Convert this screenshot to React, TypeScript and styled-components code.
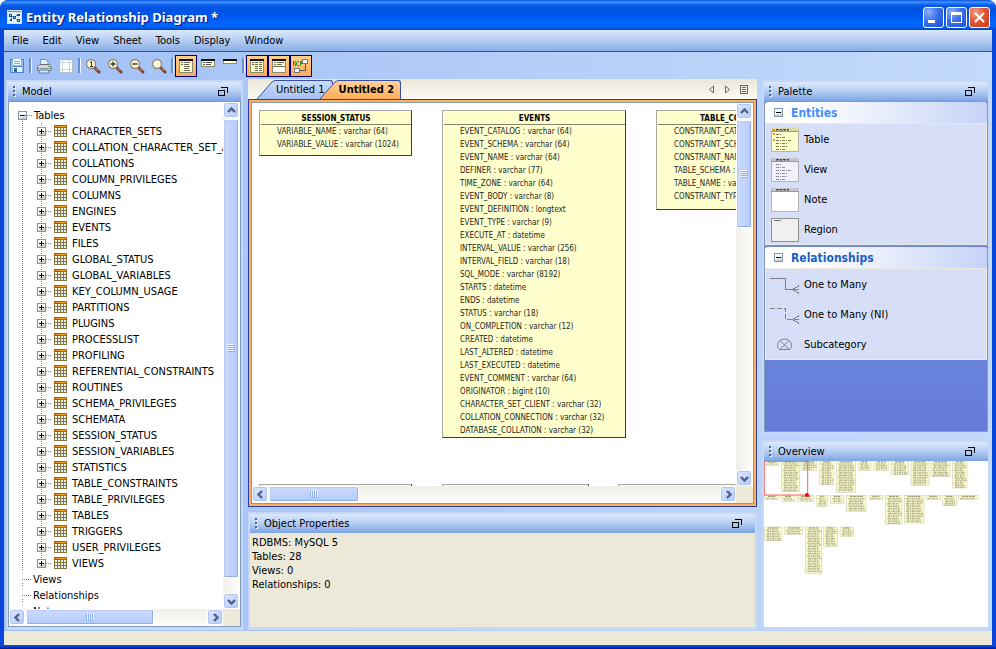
import React from "react";
import styled, { createGlobalStyle, css } from "styled-components";

const Global = createGlobalStyle`
  * { box-sizing: border-box; }
  html, body { margin: 0; padding: 0; background: #fff; }
  body, button { font-family: "DejaVu Sans Condensed", "DejaVu Sans", "Noto Sans", sans-serif; font-size: 11px; line-height: 16px; color: #000; }
  body { font-stretch: condensed; }
  button { padding: 0; border: 0; background: none; font-stretch: inherit; }
  ul { list-style: none; margin: 0; padding: 0; }
  svg { display: block; flex: none; }
`;

/* ---------- window chrome ---------- */

const Window = styled.div`
  height: 100vh;
  display: flex;
  flex-direction: column;
  overflow: hidden;
  border-radius: 8px 8px 0 0;
  background: #0b46dc;
`;

const TitleBar = styled.header`
  flex: none;
  height: 30px;
  display: flex;
  align-items: center;
  gap: 4px;
  padding: 4px 6px 0 7px;
  border-radius: 8px 8px 0 0;
  background: linear-gradient(#0a4fe0 0, #3d95ff 2px, #0a5ce8 5px, #0052e3 10px, #0058ee 16px, #0066fd 24px, #0060f8 27px, #0040c4 30px);
`;

const Title = styled.h1`
  flex: 1;
  margin: 0;
  font: bold 13px/18px "Noto Sans", "Open Sans", sans-serif;
  font-stretch: condensed;
  color: #fff;
  text-shadow: 1px 1px 1px #0a1883;
`;

const WindowButtons = styled.div`
  display: flex;
  gap: 2px;
`;

const WindowButton = styled.button<{ $close?: boolean }>`
  width: 21px;
  height: 21px;
  display: grid;
  place-items: center;
  border: 1px solid #fff;
  border-radius: 3px;
  background: ${(p) =>
    p.$close
      ? "radial-gradient(circle at 30% 25%, #f0a088 0, #e0573a 45%, #c93a12 100%)"
      : "radial-gradient(circle at 25% 20%, #8eaefa 0, #3c71ea 45%, #1c4fd8 100%)"};
`;

const Frame = styled.div`
  flex: 1;
  min-height: 0;
  display: flex;
  flex-direction: column;
  margin: 0 4px;
  background: linear-gradient(90deg, #a2c0f6, #c3dafa);
`;

const BottomEdge = styled.div`
  flex: none;
  height: 4px;
  background: linear-gradient(#0a50ee, #0838c8 50%, #001590);
`;

const MenuBar = styled.nav`
  flex: none;
  height: 22px;
  display: flex;
  align-items: center;
  padding: 1px 1px 0;
  border-bottom: 1px solid #3a4ea6;
  background: linear-gradient(#dbe9fb, #b5cdf2 50%, #8aaee5);
`;

const MenuItem = styled.button`
  padding: 0 7px;
`;

const ToolBar = styled.div`
  flex: none;
  height: 27px;
  display: flex;
  align-items: center;
  padding: 0 2px;
`;

const ToolButton = styled.button<{ $on?: boolean }>`
  width: 22px;
  height: 22px;
  display: grid;
  place-items: center;
  ${(p) =>
    p.$on &&
    css`
      border: 1px solid #000080;
      background: linear-gradient(#ffd08a, #ffab57);
    `}
`;

const ToolSeparator = styled.i`
  width: 5px;
  height: 15px;
  display: flex;
  justify-content: center;
  &::before {
    content: "";
    width: 2px;
    background: #6a8ccb;
    border-right: 1px solid #f1f6ff;
  }
`;

const Workspace = styled.main`
  flex: 1;
  min-height: 0;
  display: grid;
  grid-template-columns: 237px minmax(0, 1fr) 228px;
  column-gap: 5px;
  padding: 0 2px 1px;
`;

const Column = styled.div<{ $gap?: number; $top?: number }>`
  min-width: 0;
  min-height: 0;
  display: flex;
  flex-direction: column;
  gap: ${(p) => p.$gap ?? 0}px;
  padding-top: ${(p) => p.$top ?? 0}px;
`;

const StatusBar = styled.footer`
  flex: none;
  height: 14px;
  background: #ece9d8;
`;

/* ---------- docked panel ---------- */

const PanelBox = styled.section<{ $height?: number }>`
  ${(p) => (p.$height ? `flex: none; height: ${p.$height}px;` : "flex: 1; min-height: 0;")}
  display: flex;
  flex-direction: column;
  padding: 2px 2px 3px;
  background: #c5d8fb;
`;

const PanelHeader = styled.header`
  flex: none;
  height: 19px;
  display: flex;
  align-items: center;
  gap: 6px;
  padding: 0 13px 0 5px;
  background: linear-gradient(#dce9fc, #b4cdf3 50%, #7da4e4);
`;

const PanelTitle = styled.h2`
  flex: 1;
  margin: 0;
  font: inherit;
`;

const PanelBody = styled.div<{ $tone?: string; $framed?: boolean }>`
  flex: 1;
  min-height: 0;
  display: flex;
  flex-direction: column;
  background: ${(p) => p.$tone ?? "#fff"};
  border: ${(p) => (p.$framed ? "1px solid #7f9db9" : "0")};
`;

const Grip = () => (
  <svg width="3" height="12" viewBox="0 0 3 12" shapeRendering="crispEdges" aria-hidden>
    {[0, 4, 8].map((y) => (
      <g key={y}>
        <rect x="1" y={y + 1} width="2" height="2" fill="#eef4ff" />
        <rect x="0" y={y} width="2" height="2" fill="#4a66a8" />
      </g>
    ))}
  </svg>
);

const FloatGlyph = () => (
  <svg width="10" height="9" viewBox="0 0 10 9" shapeRendering="crispEdges" aria-hidden>
    <path d="M0 3h7v6H0zM1 4v4h5V4z" fill="#000" fillRule="evenodd" />
    <path d="M3 0h7v6H9V1H3z" fill="#000" />
  </svg>
);

function Panel(props: {
  title: string;
  height?: number;
  tone?: string;
  framed?: boolean;
  children: React.ReactNode;
}) {
  return (
    <PanelBox $height={props.height} aria-label={props.title}>
      <PanelHeader>
        <Grip />
        <PanelTitle>{props.title}</PanelTitle>
        <button aria-label={`Float ${props.title}`}>
          <FloatGlyph />
        </button>
      </PanelHeader>
      <PanelBody $tone={props.tone} $framed={props.framed}>
        {props.children}
      </PanelBody>
    </PanelBox>
  );
}

/* ---------- scrolling ---------- */

const ScrollGrid = styled.div`
  flex: 1;
  min-height: 0;
  display: grid;
  grid-template: minmax(0, 1fr) 17px / minmax(0, 1fr) 17px;
  background: #ece9d8;
`;

const Viewport = styled.div`
  position: relative;
  overflow: hidden;
  background: #fff;
`;

const Bar = styled.div<{ $vertical?: boolean }>`
  display: flex;
  flex-direction: ${(p) => (p.$vertical ? "column" : "row")};
  min-width: 0;
  min-height: 0;
  padding: ${(p) => (p.$vertical ? "0 1px 0 0" : "0 0 1px")};
  background: linear-gradient(${(p) => (p.$vertical ? "90deg" : "180deg")}, #f0efe9, #fefefb);
`;

const Track = styled.div<{ $vertical?: boolean }>`
  flex: 1;
  min-width: 0;
  min-height: 0;
  display: flex;
  flex-direction: ${(p) => (p.$vertical ? "column" : "row")};
  padding: ${(p) => (p.$vertical ? "1px 0" : "0 1px")};
`;

const Arrow = styled.button`
  flex: none;
  width: 16px;
  height: 16px;
  display: grid;
  place-items: center;
  border: 1px solid #fff;
  border-radius: 3px;
  background: linear-gradient(135deg, #dce7fe, #b4cafa);
  box-shadow: inset 0 0 0 1px #b0c6f2;
`;

const Thumb = styled.div<{ $vertical?: boolean; $share: number }>`
  flex: none;
  ${(p) => (p.$vertical ? "height" : "width")}: ${(p) => p.$share}%;
  display: grid;
  place-items: center;
  border: 1px solid #fff;
  border-radius: 2px;
  background: linear-gradient(${(p) => (p.$vertical ? "90deg" : "180deg")}, #cbdafd, #bacffc 80%, #b0c6f6);
  box-shadow: inset -1px -1px 0 #93aee6, inset 1px 1px 0 #b7cbf6;
`;

const arrows = {
  up: "M1 6 4.500 2.500 8 6",
  down: "M1 3 4.500 6.500 8 3",
  left: "M6 1 2.500 4.500 6 8",
  right: "M3 1 6.500 4.500 3 8",
};

function ScrollBar({ vertical, share, label }: { vertical?: boolean; share: number; label: string }) {
  const [a, b] = vertical ? (["up", "down"] as const) : (["left", "right"] as const);
  const arrow = (dir: keyof typeof arrows) => (
    <Arrow aria-label={`${label} ${dir}`}>
      <svg width="9" height="9" viewBox="0 0 9 9" aria-hidden>
        <path d={arrows[dir]} fill="none" stroke="#4d6185" strokeWidth="2.400" />
      </svg>
    </Arrow>
  );
  return (
    <Bar $vertical={vertical}>
      {arrow(a)}
      <Track $vertical={vertical}>
        <Thumb $vertical={vertical} $share={share}>
          <svg width="8" height="8" viewBox="0 0 8 8" shapeRendering="crispEdges" aria-hidden>
            <g transform={vertical ? undefined : "rotate(90 4 4)"}>
              {[0, 2, 4, 6].map((y) => (
                <g key={y}>
                  <rect y={y} width="7" height="1" fill="#eef4fe" />
                  <rect x="1" y={y + 1} width="7" height="1" fill="#8cb0f8" />
                </g>
              ))}
            </g>
          </svg>
        </Thumb>
      </Track>
      {arrow(b)}
    </Bar>
  );
}

/* ---------- model tree ---------- */

const tableNames = [
  "CHARACTER_SETS",
  "COLLATION_CHARACTER_SET_APPLICABILITY",
  "COLLATIONS",
  "COLUMN_PRIVILEGES",
  "COLUMNS",
  "ENGINES",
  "EVENTS",
  "FILES",
  "GLOBAL_STATUS",
  "GLOBAL_VARIABLES",
  "KEY_COLUMN_USAGE",
  "PARTITIONS",
  "PLUGINS",
  "PROCESSLIST",
  "PROFILING",
  "REFERENTIAL_CONSTRAINTS",
  "ROUTINES",
  "SCHEMA_PRIVILEGES",
  "SCHEMATA",
  "SESSION_STATUS",
  "SESSION_VARIABLES",
  "STATISTICS",
  "TABLE_CONSTRAINTS",
  "TABLE_PRIVILEGES",
  "TABLES",
  "TRIGGERS",
  "USER_PRIVILEGES",
  "VIEWS",
];

const dotsDown = "repeating-linear-gradient(#808080 0 1px, transparent 1px 2px)";
const dotsAcross = "repeating-linear-gradient(90deg, #808080 0 1px, transparent 1px 2px)";

const Tree = styled.ul`
  padding: 5px 0 0 9px;
  white-space: nowrap;
`;

const Branch = styled.li`
  background: ${dotsDown} 4px 12px / 1px 100% no-repeat;
`;

const Leaves = styled.ul`
  margin-left: 19px;
  background: ${dotsDown} 4px 0 / 1px calc(100% - 8px) no-repeat;
`;

const Node = styled.div<{ $leaf?: boolean }>`
  height: 16px;
  display: flex;
  align-items: center;
  padding-left: ${(p) => (p.$leaf ? 4 : 0)}px;
`;

const Stub = styled.i<{ $width: number }>`
  flex: none;
  width: ${(p) => p.$width}px;
  height: 1px;
  margin-right: 2px;
  background: ${dotsAcross};
`;

const Label = styled.span`
  padding-top: 2px;
  ${Leaves} & { margin-left: 5px; }
`;

const BoxGlyph = ({ plus }: { plus?: boolean }) => (
  <svg width="9" height="9" viewBox="0 0 9 9" shapeRendering="crispEdges" aria-hidden>
    <rect x="0" y="0" width="9" height="9" fill="#7898b5" />
    <rect x="1" y="1" width="7" height="7" fill="#fff" />
    <path d="M3 6h5v2H1V7h2zM7 3h1v3H7z" fill="#d5cfc0" />
    <path d={plus ? "M2 4h5v1H2zM4 2h1v5H4z" : "M2 4h5v1H2z"} fill="#000" />
  </svg>
);

const TableGlyph = () => (
  <svg width="13" height="12" viewBox="0 0 13 12" shapeRendering="crispEdges" aria-hidden>
    <rect width="13" height="12" fill="#857440" />
    <rect width="13" height="3" fill="#b3541e" />
    <rect x="1" y="1" width="11" height="1" fill="#ffb400" />
    <rect x="1" y="1" width="5" height="1" fill="#f08a1c" />
    {[3, 6, 9].map((y) =>
      [1, 4, 7, 10].map((x) => (
        <rect key={`${x}-${y}`} x={x} y={y} width="2" height="2" fill={x < 4 ? "#fff" : "#dff0ee"} />
      )),
    )}
  </svg>
);

function ModelTree() {
  return (
    <Tree aria-label="Model">
      <Branch>
        <Node>
          <button aria-label="Collapse Tables">
            <BoxGlyph />
          </button>
          <Stub $width={5} />
          <Label>Tables</Label>
        </Node>
        <Leaves>
          {tableNames.map((name) => (
            <li key={name}>
              <Node>
                <button aria-label={`Expand ${name}`}>
                  <BoxGlyph plus />
                </button>
                <Stub $width={6} />
                <TableGlyph />
                <Label>{name}</Label>
              </Node>
            </li>
          ))}
        </Leaves>
      </Branch>
      {["Views", "Relationships", "Notes"].map((name) => (
        <Branch key={name}>
          <Node $leaf>
            <Stub $width={9} />
            <Label>{name}</Label>
          </Node>
        </Branch>
      ))}
    </Tree>
  );
}

/* ---------- document tabs ---------- */

const TabStrip = styled.div`
  flex: none;
  height: 20px;
  display: flex;
  align-items: flex-end;
  padding-left: 8px;
  background: linear-gradient(#eae7d6, #fbfaf5);
`;

const TabButton = styled.button<{ $active?: boolean }>`
  display: flex;
  height: 19px;
  font-weight: ${(p) => (p.$active ? "bold" : "normal")};
  & + & { margin-left: -14px; }
`;

const TabFace = styled.span<{ $active?: boolean }>`
  height: 19px;
  padding: ${(p) => (p.$active ? "0 6px 0 0" : "0 7px 0 0")};
  line-height: 18px;
  border: 1px solid #3a4ea6;
  border-width: 1px 1px 0 0;
  border-radius: 0 3px 0 0;
  background: ${(p) => (p.$active ? "linear-gradient(#ffd09a, #ffad56)" : "linear-gradient(#c9dcfa, #a3c2f5)")};
`;

const TabTools = styled.div`
  flex: 1;
  display: flex;
  justify-content: flex-end;
  align-items: center;
  gap: 9px;
  height: 20px;
  padding-right: 9px;
`;

function Tab({ name, active }: { name: string; active?: boolean }) {
  const id = active ? "slope-on" : "slope-off";
  return (
    <TabButton role="tab" aria-selected={!!active} $active={active}>
      <svg width="20" height="19" viewBox="0 0 20 19" aria-hidden>
        <defs>
          <linearGradient id={id} x1="0" y1="0" x2="0" y2="1">
            <stop offset="0" stopColor={active ? "#ffd09a" : "#c9dcfa"} />
            <stop offset="1" stopColor={active ? "#ffad56" : "#a3c2f5"} />
          </linearGradient>
        </defs>
        <path d="M1 19 16 2Q17.500 .5 20 .5V19Z" fill={`url(#${id})`} />
        <path d="M1 19 16 2Q17.500 .5 20 .5" fill="none" stroke="#3a4ea6" />
      </svg>
      <TabFace $active={active}>{name}</TabFace>
    </TabButton>
  );
}

const DocFrame = styled.div`
  flex: 1;
  min-height: 0;
  display: flex;
  padding: 2px;
  margin-bottom: 5px;
  border: 1px solid #2f3f9f;
  background: #ffad56;
`;

const DocInner = styled.div`
  flex: 1;
  min-width: 0;
  display: flex;
  border: 1px solid #7f9db9;
`;

/* ---------- diagram ---------- */

const Entity = styled.article<{ $x: number; $y: number; $w: number; $h: number }>`
  position: absolute;
  left: ${(p) => p.$x}px;
  top: ${(p) => p.$y}px;
  width: ${(p) => p.$w}px;
  min-height: ${(p) => p.$h}px;
  border: 1px solid #3c3c30;
  border-top-color: #a8a8a0;
  border-left-color: #a8a8a0;
  background: #ffffce;
  font-size: 8px;
  line-height: 13px;
  color: #26261c;
  white-space: nowrap;
`;

const EntityName = styled.h3`
  margin: 0 0 0 1px;
  height: 14px;
  border-bottom: 1px solid #85856c;
  font-size: 8px;
  line-height: 15px;
  text-align: center;
  color: #000;
`;

const Columns = styled.ul`
  padding-left: 17px;
`;

type EntityData = { name: string; x: number; y: number; w: number; h: number; columns: string[] };

const entities: EntityData[] = [
  {
    name: "SESSION_STATUS", x: 7, y: 7, w: 153, h: 46,
    columns: ["VARIABLE_NAME : varchar (64)", "VARIABLE_VALUE : varchar (1024)"],
  },
  {
    name: "EVENTS", x: 190, y: 7, w: 184, h: 328,
    columns: [
      "EVENT_CATALOG : varchar (64)",
      "EVENT_SCHEMA : varchar (64)",
      "EVENT_NAME : varchar (64)",
      "DEFINER : varchar (77)",
      "TIME_ZONE : varchar (64)",
      "EVENT_BODY : varchar (8)",
      "EVENT_DEFINITION : longtext",
      "EVENT_TYPE : varchar (9)",
      "EXECUTE_AT : datetime",
      "INTERVAL_VALUE : varchar (256)",
      "INTERVAL_FIELD : varchar (18)",
      "SQL_MODE : varchar (8192)",
      "STARTS : datetime",
      "ENDS : datetime",
      "STATUS : varchar (18)",
      "ON_COMPLETION : varchar (12)",
      "CREATED : datetime",
      "LAST_ALTERED : datetime",
      "LAST_EXECUTED : datetime",
      "EVENT_COMMENT : varchar (64)",
      "ORIGINATOR : bigint (10)",
      "CHARACTER_SET_CLIENT : varchar (32)",
      "COLLATION_CONNECTION : varchar (32)",
      "DATABASE_COLLATION : varchar (32)",
    ],
  },
  {
    name: "TABLE_CONSTRAINTS", x: 404, y: 7, w: 173, h: 100,
    columns: [
      "CONSTRAINT_CATALOG : varchar (512)",
      "CONSTRAINT_SCHEMA : varchar (64)",
      "CONSTRAINT_NAME : varchar (64)",
      "TABLE_SCHEMA : varchar (64)",
      "TABLE_NAME : varchar (64)",
      "CONSTRAINT_TYPE : varchar (64)",
    ],
  },
  { name: "", x: 7, y: 381, w: 153, h: 40, columns: [] },
  { name: "", x: 190, y: 381, w: 147, h: 40, columns: [] },
  { name: "", x: 366, y: 381, w: 160, h: 40, columns: [] },
];

/* ---------- palette ---------- */

const PaletteBody = styled.div`
  flex: 1;
  display: flex;
  flex-direction: column;
  gap: 2px;
  background: linear-gradient(#7393e2, #6a87dd 70%, #667ad8);
`;

const GroupHead = styled.h3<{ $hot?: boolean }>`
  height: 21px;
  margin: 0;
  display: flex;
  align-items: center;
  gap: 8px;
  padding-left: 9px;
  border-radius: 3px 3px 0 0;
  background: linear-gradient(90deg, #fff 20%, #c6d3f7);
  font-size: 12px;
  color: ${(p) => (p.$hot ? "#428eff" : "#215dc6")};
`;

const GroupItems = styled.ul`
  border: 1px solid #ece9e2;
  background: #d6dff7;
`;

const PaletteButton = styled.button`
  width: 100%;
  height: 30px;
  display: flex;
  align-items: center;
  gap: 4px;
  padding: 2px 0 0 4px;
  text-align: left;
`;

const EntityPreview = ({ kind }: { kind: "table" | "view" | "note" | "region" }) => {
  const fill = { table: "#ffffcc", view: "#f0f0ff", note: "#ffffff", region: "#f0f0f0" }[kind];
  const rows = [6, 10, 15, 12, 11, 9];
  return (
    <svg width="30" height="26" viewBox="0 0 30 26" shapeRendering="crispEdges" aria-hidden>
      <rect x="1" y="1" width="28" height="24" fill={kind === "region" ? "#909090" : "#b4b4b4"} />
      <rect x="2" y="2" width="26" height="22" fill={fill} />
      {kind === "region" ? (
        <rect x="4" y="3" width="7" height="1" fill="#777" />
      ) : (
        <>
          <rect x="1" y="1" width="28" height="4" fill={kind === "table" ? "#dedca8" : "#c4c4cc"} />
          <path d="M6 2.500h13" stroke="#444" strokeDasharray="3 1 2 1" />
          <path d="M6 3.500h13" stroke="#888" strokeDasharray="2 1 4 1" />
          <path d="M1 4.500h28" stroke="#999" />
        </>
      )}
      {(kind === "table" || kind === "view") &&
        rows.map((w, i) => (
          <path
            key={i}
            d={`M6 ${i * 3 + 7}.500h${w}`}
            stroke={kind === "table" ? "#7c7c50" : "#8c8c9c"}
            strokeDasharray="3 1 1 1"
          />
        ))}
      {kind === "table" && <path d="M2 2h3v2H2zM3 6h2v2H3zM3 12h2v2H3z" fill="#e0981c" />}
    </svg>
  );
};

const LinkPreview = ({ dashed }: { dashed?: boolean }) => (
  <svg width="30" height="18" viewBox="0 0 30 18" shapeRendering="crispEdges" aria-hidden>
    <path d="M0 2.500h15.500V13.500H29" fill="none" stroke="#808080" strokeDasharray={dashed ? "5 2" : undefined} />
    <path d="M22 13.500 29.500 9.500M22 13.500 29.500 17.500" fill="none" stroke="#808080" />
  </svg>
);

const SubcategoryPreview = () => (
  <svg width="30" height="18" viewBox="0 0 30 18" aria-hidden>
    <path
      d="M9.500 13.500Q7.500 11.500 7.500 9.500A7 6.500 0 0 1 21.500 9.500Q21.500 11.500 19.500 13.500ZM10 4.500 19 13.500M19 4.500 10 13.500"
      fill="none"
      stroke="#808080"
    />
  </svg>
);

/* ---------- object properties ---------- */

const Facts = styled.ul`
  padding: 3px 2px;
  line-height: 14px;
`;

/* ---------- overview ---------- */

/* x, y, width, height of each entity on the sheet */
const thumbs = [
  [2, 0, 43, 13], [53, 0, 53, 91], [111, 0, 48, 28], [167, 0, 43, 71], [218, 0, 57, 94],
  [282, 0, 39, 28], [330, 0, 45, 28], [383, 0, 50, 40], [441, 0, 54, 73], [501, 0, 57, 46],
  [566, 0, 43, 81],
  [2, 103, 43, 12], [53, 103, 40, 18], [101, 103, 48, 18], [158, 103, 33, 33], [200, 103, 40, 24],
  [248, 103, 58, 48], [315, 103, 42, 12], [365, 103, 49, 86], [421, 103, 59, 83],
  [487, 103, 43, 12], [536, 103, 42, 30], [584, 103, 58, 12],
  [2, 198, 52, 40], [62, 198, 55, 22], [125, 198, 48, 139], [179, 198, 41, 58], [228, 198, 41, 28],
];

function Overview() {
  return (
    <svg width="224" height="166" viewBox="0 0 672 498" role="img" aria-label="Sheet overview">
      {thumbs.map(([x, y, w, h], i) => (
        <g key={i}>
          <rect x={x} y={y} width={w} height={h} fill="#fbfbca" stroke="#d4d4b8" strokeWidth="2" />
          <path d={`M${x + 10} ${y + 3}h${w - 20}`} stroke="#55553c" strokeWidth="3" strokeDasharray="8 2" opacity="0.700" />
          {Array.from({ length: Math.floor((h - 5) / 5) }, (_, r) => (
            <path
              key={r}
              d={`M${x + 5 + ((r * 3) % 4)} ${y + 9 + r * 5}h${w - 9 - ((r * 7 + i) % 8)}`}
              stroke="#85856c"
              strokeWidth="3"
              strokeDasharray={`${6 + ((r + i) % 4)} 2 4 2`}
              opacity="0.700"
            />
          ))}
        </g>
      ))}
      <rect x="1" y="1" width="130" height="101" fill="none" stroke="#ff6060" strokeWidth="3" />
      <circle cx="129" cy="102" r="6" fill="#ff0000" />
    </svg>
  );
}

/* ---------- toolbar glyphs ---------- */

const Pixels = ({ children, smooth }: { children: React.ReactNode; smooth?: boolean }) => (
  <svg width="16" height="16" viewBox="0 0 16 16" shapeRendering={smooth ? "auto" : "crispEdges"} aria-hidden>
    {children}
  </svg>
);

const SaveGlyph = () => (
  <Pixels>
    <path d="M1 1h13l1 1v13H1z" fill="#4a86c4" />
    <path d="M2 2h12v12H2z" fill="#8fc0ec" />
    <path d="M4 1h8v6H4z" fill="#f4f9ff" />
    <path d="M5 3h6v1H5zM5 5h6v1H5z" fill="#8fb0d0" />
    <path d="M4 9h9v5H4z" fill="#e8f2fb" />
    <path d="M5 10h3v4H5z" fill="#2f6aa8" />
    <path d="M4 8h9v1H4z" fill="#4a86c4" />
  </Pixels>
);

const PrintGlyph = () => (
  <Pixels smooth>
    <path d="M4.500 7V1.500h5l2.500 2V7z" fill="#e4f2ff" stroke="#5f93cc" />
    <path d="M1.500 12.500v-4l2-2h10l1.500 2v4z" fill="#d4d6da" stroke="#6b7077" />
    <path d="M2 10.500h13" stroke="#8d9299" />
    <path d="M4 12h8l1 3H3z" fill="#cfe6ff" stroke="#5a85b5" />
    <path d="M12 8.500h1.500" stroke="#4aa03a" />
  </Pixels>
);

const GridGlyph = () => (
  <Pixels>
    <rect x="1" y="1" width="14" height="14" fill="#fff" />
    <path d="M1 4.500h14M1 11.500h14M4.500 1v14M11.500 1v14" stroke="#c8d6ec" />
    <rect x="1.500" y="1.500" width="13" height="13" fill="none" stroke="#b0bccc" />
  </Pixels>
);

const ZoomGlyph = ({ mark }: { mark?: "one" | "plus" | "minus" }) => (
  <Pixels smooth>
    <path d="M9.500 9.500 14 14" stroke="#7a3a2c" strokeWidth="3" strokeLinecap="round" />
    <path d="M10.500 10 13.500 13" stroke="#eaa880" />
    <circle cx="6" cy="6" r="4.500" fill="#fbf6dc" stroke="#8f8a76" strokeWidth="1.300" />
    {mark === "plus" && <path d="M3.500 6h5M6 3.500v5" stroke="#3c3828" strokeWidth="1.300" />}
    {mark === "minus" && <path d="M3.500 6h5" stroke="#3c3828" strokeWidth="1.300" />}
    {mark === "one" && <path d="M5 4.500 6.500 3.500V8.500M5 8.500h3" fill="none" stroke="#3c3828" />}
  </Pixels>
);

const SheetGlyph = ({ kind }: { kind: "full" | "keys" | "name" | "columns" | "split" }) => {
  const h = { full: 14, keys: 8, name: 5, columns: 14, split: 14 }[kind];
  return (
    <Pixels>
      <rect x="1" y="1" width="14" height={h} fill="#8c8c70" />
      <rect x="2" y="3" width="12" height={h - 3} fill="#ffffcc" />
      <rect x="1" y="1" width="14" height="2" fill="#111" />
      {kind === "keys" && <path d="M3 4h2v1H3zM3 6h2v1H3zM6 4h6v1H6zM6 6h5v1H6z" fill="#555" />}
      {kind === "full" && (
        <path d="M3 4h2v1H3zM3 6h2v1H3zM6 4h6v1H6zM6 6h5v1H6zM6 8h6v1H6zM6 10h5v1H6zM6 12h6v1H6z" fill="#6c6c54" />
      )}
      {kind === "columns" && (
        <path
          d="M3 4h2v1H3zM3 6h2v1H3zM6 4h3v1H6zM10 4h3v1h-3zM6 6h3v1H6zM10 6h3v1h-3zM6 8h3v1H6zM10 8h3v1h-3zM6 10h3v1H6zM10 10h3v1h-3zM6 12h3v1H6zM10 12h3v1h-3z"
          fill="#6c6c54"
        />
      )}
      {kind === "split" && (
        <>
          <rect x="2" y="8" width="12" height="6" fill="#fff" />
          <path d="M3 4h2v1H3zM6 4h7v1H6zM3 6h2v1H3zM6 6h5v1H6zM2 8h12v1H2z" fill="#6c6c54" />
        </>
      )}
    </Pixels>
  );
};

const RelationGlyph = () => (
  <Pixels>
    <path d="M9 1h6v5H9zM1 10h6v5H1z" fill="#777" />
    <path d="M10 2h4v3h-4zM2 11h4v3H2z" fill="#f0f4fc" />
    <path d="M12.500 6v6.500H7" fill="none" stroke="#555" />
    <path
      d="M0 3h1v5H0zM1 5h1v1H1zM2 3h1v2H2zM2 6h1v2H2zM4 3h2v1H4zM3 4h1v3H3zM4 7h2v1H4zM7 3h1v5H7zM8 3h1v3H8z"
      fill="#1e9c2c"
    />
  </Pixels>
);

const AppGlyph = () => (
  <svg width="15" height="14" viewBox="0 0 15 14" shapeRendering="crispEdges" aria-hidden>
    <rect width="15" height="14" fill="#d8e0e4" />
    <rect x="1" y="1" width="13" height="1" fill="#5a9be8" />
    <rect x="1" y="3" width="13" height="10" fill="#e4f0fa" />
    <path d="M2 4h3v3H2zM10 4h3v2h-3zM6 6h3v3H6zM10 9h3v3h-3zM3 9h2v2H3z" fill="#16508c" />
    <path d="M3 5h1v1H3zM7 7h1v1H7zM11 10h1v1h-1z" fill="#cfe4f8" />
    <path d="M5 6.500h1M4.500 7v2M9 9.500h1M9 5.500h1" stroke="#5a93c8" />
  </svg>
);

const tools: { label: string; icon?: React.ReactNode; on?: boolean }[] = [
  { label: "Save", icon: <SaveGlyph /> },
  { label: "" },
  { label: "Print", icon: <PrintGlyph /> },
  { label: "Page grid", icon: <GridGlyph /> },
  { label: "" },
  { label: "Actual size", icon: <ZoomGlyph mark="one" /> },
  { label: "Zoom in", icon: <ZoomGlyph mark="plus" /> },
  { label: "Zoom out", icon: <ZoomGlyph mark="minus" /> },
  { label: "Zoom to fit", icon: <ZoomGlyph /> },
  { label: "" },
  { label: "All columns", icon: <SheetGlyph kind="full" />, on: true },
  { label: "Key columns", icon: <SheetGlyph kind="keys" /> },
  { label: "Names only", icon: <SheetGlyph kind="name" /> },
  { label: "" },
  { label: "Data types", icon: <SheetGlyph kind="columns" />, on: true },
  { label: "Separate keys", icon: <SheetGlyph kind="split" />, on: true },
  { label: "Relationship names", icon: <RelationGlyph />, on: true },
];

export default function App() {
  return (
    <>
      <Global />
      <Window>
        <TitleBar>
          <AppGlyph />
          <Title>Entity Relationship Diagram *</Title>
          <WindowButtons>
            <WindowButton aria-label="Minimize">
              <svg width="13" height="13" viewBox="0 0 13 13" shapeRendering="crispEdges" aria-hidden>
                <rect x="1" y="9" width="7" height="3" fill="#fff" />
              </svg>
            </WindowButton>
            <WindowButton aria-label="Maximize">
              <svg width="13" height="13" viewBox="0 0 13 13" shapeRendering="crispEdges" aria-hidden>
                <path d="M1 1h11v11H1zM2 4v7h9V4z" fill="#fff" fillRule="evenodd" />
              </svg>
            </WindowButton>
            <WindowButton $close aria-label="Close">
              <svg width="13" height="13" viewBox="0 0 13 13" aria-hidden>
                <path d="M2 2 11 11M11 2 2 11" stroke="#fff" strokeWidth="2.200" />
              </svg>
            </WindowButton>
          </WindowButtons>
        </TitleBar>
        <Frame>
          <MenuBar aria-label="Main menu">
            {["File", "Edit", "View", "Sheet", "Tools", "Display", "Window"].map((m) => (
              <MenuItem key={m}>{m}</MenuItem>
            ))}
          </MenuBar>
          <ToolBar role="toolbar" aria-label="Diagram tools">
            {tools.map((t, i) =>
              t.icon ? (
                <ToolButton key={i} $on={t.on} aria-label={t.label} aria-pressed={t.on}>
                  {t.icon}
                </ToolButton>
              ) : (
                <ToolSeparator key={i} />
              ),
            )}
          </ToolBar>
          <Workspace>
            <Column $top={1}>
              <Panel title="Model" framed>
                <ScrollGrid>
                  <Viewport>
                    <ModelTree />
                  </Viewport>
                  <ScrollBar vertical share={97} label="Scroll model" />
                  <ScrollBar share={71} label="Scroll model" />
                </ScrollGrid>
              </Panel>
            </Column>
            <Column>
              <TabStrip role="tablist">
                <Tab name="Untitled 1" />
                <Tab name="Untitled 2" active />
                <TabTools>
                  <button aria-label="Previous tab">
                    <svg width="7" height="9" viewBox="0 0 7 9" aria-hidden>
                      <path d="M5.500 1V8L1.500 4.500Z" fill="none" stroke="#6c6a5e" />
                    </svg>
                  </button>
                  <button aria-label="Next tab">
                    <svg width="7" height="9" viewBox="0 0 7 9" aria-hidden>
                      <path d="M1.500 1V8L5.500 4.500Z" fill="none" stroke="#6c6a5e" />
                    </svg>
                  </button>
                  <button aria-label="List tabs">
                    <svg width="8" height="9" viewBox="0 0 8 9" shapeRendering="crispEdges" aria-hidden>
                      <path d="M0 0h8v9H0zM1 1v7h6V1z" fill="#6c6a5e" fillRule="evenodd" />
                      <path d="M2 2h4v1H2zM2 4h4v1H2zM2 6h4v1H2z" fill="#6c6a5e" />
                    </svg>
                  </button>
                </TabTools>
              </TabStrip>
              <DocFrame>
                <DocInner>
                  <ScrollGrid>
                    <Viewport>
                      {entities.map((e) => (
                        <Entity key={`${e.x}-${e.y}`} $x={e.x} $y={e.y} $w={e.w} $h={e.h}>
                          <EntityName>{e.name}</EntityName>
                          <Columns>
                            {e.columns.map((c) => (
                              <li key={c}>{c}</li>
                            ))}
                          </Columns>
                        </Entity>
                      ))}
                    </Viewport>
                    <ScrollBar vertical share={31} label="Scroll diagram" />
                    <ScrollBar share={20} label="Scroll diagram" />
                  </ScrollGrid>
                </DocInner>
              </DocFrame>
              <Panel title="Object Properties" height={118} tone="#ece9d8">
                <Facts>
                  <li>RDBMS: MySQL 5</li>
                  <li>Tables: 28</li>
                  <li>Views: 0</li>
                  <li>Relationships: 0</li>
                </Facts>
              </Panel>
            </Column>
            <Column $gap={5} $top={1}>
              <Panel title="Palette" framed>
                <PaletteBody>
                  <div>
                    <GroupHead $hot>
                      <button aria-label="Collapse Entities">
                        <BoxGlyph />
                      </button>
                      Entities
                    </GroupHead>
                    <GroupItems>
                      {(["table", "view", "note", "region"] as const).map((kind) => (
                        <li key={kind}>
                          <PaletteButton>
                            <EntityPreview kind={kind} />
                            {kind[0].toUpperCase() + kind.slice(1)}
                          </PaletteButton>
                        </li>
                      ))}
                    </GroupItems>
                  </div>
                  <div>
                    <GroupHead>
                      <button aria-label="Collapse Relationships">
                        <BoxGlyph />
                      </button>
                      Relationships
                    </GroupHead>
                    <GroupItems>
                      <li>
                        <PaletteButton>
                          <LinkPreview />
                          One to Many
                        </PaletteButton>
                      </li>
                      <li>
                        <PaletteButton>
                          <LinkPreview dashed />
                          One to Many (NI)
                        </PaletteButton>
                      </li>
                      <li>
                        <PaletteButton>
                          <SubcategoryPreview />
                          Subcategory
                        </PaletteButton>
                      </li>
                    </GroupItems>
                  </div>
                </PaletteBody>
              </Panel>
              <Panel title="Overview" height={190}>
                <Overview />
              </Panel>
            </Column>
          </Workspace>
          <StatusBar />
        </Frame>
        <BottomEdge />
      </Window>
    </>
  );
}
